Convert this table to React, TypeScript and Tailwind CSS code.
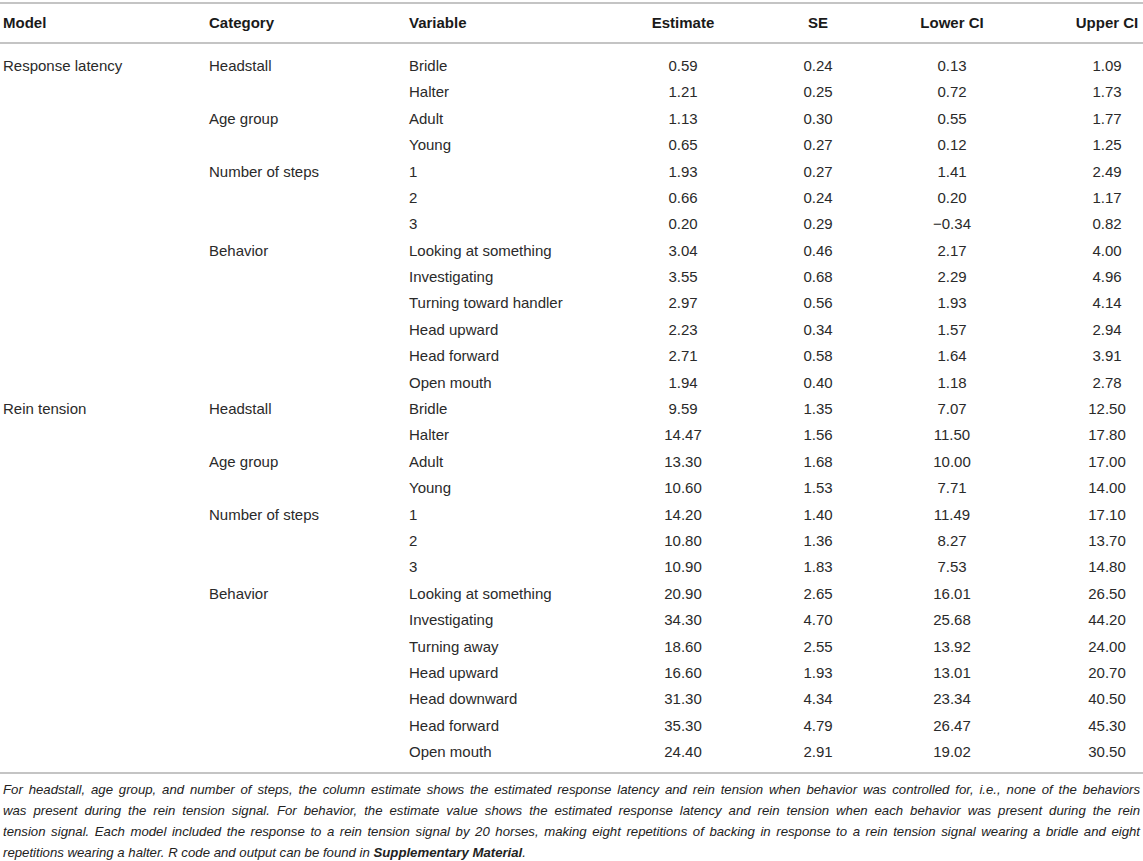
import React from 'react'

type Row = {
    model?: string
    category?: string
    variable: string
    est: string
    se: string
    lo: string
    hi: string
}

const rows: Row[] = [
    { model: 'Response latency', category: 'Headstall', variable: 'Bridle', est: '0.59', se: '0.24', lo: '0.13', hi: '1.09' },
    { variable: 'Halter', est: '1.21', se: '0.25', lo: '0.72', hi: '1.73' },
    { category: 'Age group', variable: 'Adult', est: '1.13', se: '0.30', lo: '0.55', hi: '1.77' },
    { variable: 'Young', est: '0.65', se: '0.27', lo: '0.12', hi: '1.25' },
    { category: 'Number of steps', variable: '1', est: '1.93', se: '0.27', lo: '1.41', hi: '2.49' },
    { variable: '2', est: '0.66', se: '0.24', lo: '0.20', hi: '1.17' },
    { variable: '3', est: '0.20', se: '0.29', lo: '\u22120.34', hi: '0.82' },
    { category: 'Behavior', variable: 'Looking at something', est: '3.04', se: '0.46', lo: '2.17', hi: '4.00' },
    { variable: 'Investigating', est: '3.55', se: '0.68', lo: '2.29', hi: '4.96' },
    { variable: 'Turning toward handler', est: '2.97', se: '0.56', lo: '1.93', hi: '4.14' },
    { variable: 'Head upward', est: '2.23', se: '0.34', lo: '1.57', hi: '2.94' },
    { variable: 'Head forward', est: '2.71', se: '0.58', lo: '1.64', hi: '3.91' },
    { variable: 'Open mouth', est: '1.94', se: '0.40', lo: '1.18', hi: '2.78' },
    { model: 'Rein tension', category: 'Headstall', variable: 'Bridle', est: '9.59', se: '1.35', lo: '7.07', hi: '12.50' },
    { variable: 'Halter', est: '14.47', se: '1.56', lo: '11.50', hi: '17.80' },
    { category: 'Age group', variable: 'Adult', est: '13.30', se: '1.68', lo: '10.00', hi: '17.00' },
    { variable: 'Young', est: '10.60', se: '1.53', lo: '7.71', hi: '14.00' },
    { category: 'Number of steps', variable: '1', est: '14.20', se: '1.40', lo: '11.49', hi: '17.10' },
    { variable: '2', est: '10.80', se: '1.36', lo: '8.27', hi: '13.70' },
    { variable: '3', est: '10.90', se: '1.83', lo: '7.53', hi: '14.80' },
    { category: 'Behavior', variable: 'Looking at something', est: '20.90', se: '2.65', lo: '16.01', hi: '26.50' },
    { variable: 'Investigating', est: '34.30', se: '4.70', lo: '25.68', hi: '44.20' },
    { variable: 'Turning away', est: '18.60', se: '2.55', lo: '13.92', hi: '24.00' },
    { variable: 'Head upward', est: '16.60', se: '1.93', lo: '13.01', hi: '20.70' },
    { variable: 'Head downward', est: '31.30', se: '4.34', lo: '23.34', hi: '40.50' },
    { variable: 'Head forward', est: '35.30', se: '4.79', lo: '26.47', hi: '45.30' },
    { variable: 'Open mouth', est: '24.40', se: '2.91', lo: '19.02', hi: '30.50' },
]

// column widths picked so the centred columns land where the reference has them
const grid = 'grid grid-cols-[206px_200px_157px_240px_30px_238px_72px] items-center'

export default function App() {
    return (
        <div
            className="w-[1143px] h-[861px] overflow-hidden bg-white text-[#222] pt-[2px]"
            style={{ fontFamily: '"Liberation Sans", Arial, sans-serif' }}
        >
            {/* Header */}
            <div className={`${grid} h-[42px] border-y-2 border-[#c4c4c4] text-[15px] font-bold text-[#1a1a1a]`}>
                <div className="pl-[3px]">Model</div>
                <div className="pl-[3px]">Category</div>
                <div className="pl-[3px]">Variable</div>
                <div className="text-center">Estimate</div>
                <div className="text-center whitespace-nowrap">SE</div>
                <div className="text-center">Lower CI</div>
                <div className="text-center whitespace-nowrap">Upper CI</div>
            </div>

            {/* Body */}
            <div className="pt-[9px] pb-[6px] border-b-2 border-[#c4c4c4] text-[15px] text-[#2a2a2a]">
                {rows.map((r, i) => (
                    <div key={i} className={`${grid} h-[26.4px]`}>
                        <div className="pl-[3px]">{r.model}</div>
                        <div className="pl-[3px]">{r.category}</div>
                        <div className="pl-[3px] whitespace-nowrap">{r.variable}</div>
                        <div className="text-center">{r.est}</div>
                        <div className="text-center whitespace-nowrap">{r.se}</div>
                        <div className="text-center">{r.lo}</div>
                        <div className="text-center whitespace-nowrap">{r.hi}</div>
                    </div>
                ))}
            </div>

            {/* Footnote: lines broken as in the reference, each justified */}
            <div className="pt-[5px] pl-[3px] pr-[3px] text-[13.2px] leading-[21px] italic text-[#222]">
                <div className="text-justify [text-align-last:justify]">
                    For headstall, age group, and number of steps, the column estimate shows the estimated response latency and rein tension when behavior was controlled for, i.e., none of the behaviors
                </div>
                <div className="text-justify [text-align-last:justify]">
                    was present during the rein tension signal. For behavior, the estimate value shows the estimated response latency and rein tension when each behavior was present during the rein
                </div>
                <div className="text-justify [text-align-last:justify]">
                    tension signal. Each model included the response to a rein tension signal by 20 horses, making eight repetitions of backing in response to a rein tension signal wearing a bridle and eight
                </div>
                <div>
                    repetitions wearing a halter. R code and output can be found in <span className="font-bold">Supplementary Material</span>.
                </div>
            </div>
        </div>
    )
}
